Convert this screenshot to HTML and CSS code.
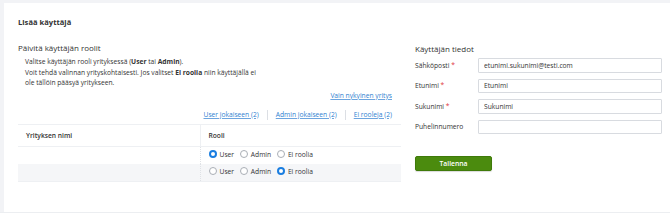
FILE: index.html
```html
<!DOCTYPE html>
<html lang="fi">

<head>
	<meta charset="UTF-8">
	<meta name="viewport"
				content="width=device-width, initial-scale=1.0">
	<title>Lisää käyttäjä</title>
	<link rel="stylesheet" href="styles.css">
</head>

<body>
	<div class="page">
		<div class="card">
			<h1 class="card-title">Lisää käyttäjä</h1>

			<div class="columns">
				<div class="roles">
					<h2 class="section-title">Päivitä käyttäjän roolit</h2>
					<p class="help">
						Valitse käyttäjän rooli yrityksessä (<b>User</b> tai <b>Admin</b>).<br>
						Voit tehdä valinnan yrityskohtaisesti. Jos valitset <b>Ei roolia</b> niin käyttäjällä ei<br>
						ole tällöin pääsyä yritykseen.
					</p>

					<div class="filter">
						<a href="#">Vain nykyinen yritys</a>
					</div>

					<div class="bulk">
						<a href="#">User jokaiseen (2)</a>
						<span class="sep"></span>
						<a href="#">Admin jokaiseen (2)</a>
						<span class="sep"></span>
						<a href="#">Ei rooleja (2)</a>
					</div>

					<table class="role-table">
						<thead>
							<tr>
								<th class="col-name">Yrityksen nimi</th>
								<th class="col-role">Rooli</th>
							</tr>
						</thead>
						<tbody>
							<tr>
								<td class="col-name"></td>
								<td class="col-role">
									<label class="radio"><input type="radio" name="r1" checked> User</label>
									<label class="radio"><input type="radio" name="r1"> Admin</label>
									<label class="radio"><input type="radio" name="r1"> Ei roolia</label>
								</td>
							</tr>
							<tr class="alt">
								<td class="col-name"></td>
								<td class="col-role">
									<label class="radio"><input type="radio" name="r2"> User</label>
									<label class="radio"><input type="radio" name="r2"> Admin</label>
									<label class="radio"><input type="radio" name="r2" checked> Ei roolia</label>
								</td>
							</tr>
						</tbody>
					</table>
				</div>

				<div class="details">
					<h2 class="section-title">Käyttäjän tiedot</h2>
					<div class="field">
						<label>Sähköposti <span class="req">*</span></label>
						<input type="text" value="etunimi.sukunimi@testi.com">
					</div>
					<div class="field">
						<label>Etunimi <span class="req">*</span></label>
						<input type="text" value="Etunimi">
					</div>
					<div class="field">
						<label>Sukunimi <span class="req">*</span></label>
						<input type="text" value="Sukunimi">
					</div>
					<div class="field">
						<label>Puhelinnumero</label>
						<input type="text" value="">
					</div>
					<button class="save">Tallenna</button>
				</div>
			</div>
		</div>
	</div>
</body>

</html>
```

FILE: styles.css
```css
* {
	box-sizing: border-box;
}

body {
	margin: 0;
	background-color: #fff;
	font-family: "Open Sans", "Noto Sans", sans-serif;
	color: #333;
	font-size: 6.7px;
}

.page {
	background-color: #f2f3f6;
	padding: 3px 0 0 4px;
	height: 213px;
	border-bottom: 1px solid #eceef1;
}

.card {
	background-color: #fff;
	height: 100%;
	padding: 14px 8px 0 14px;
}

.card-title {
	font-size: 7.6px;
	font-weight: 700;
	margin: 0;
	line-height: 10px;
}

.columns {
	display: flex;
	gap: 14px;
	margin-top: 15px;
}

.roles {
	width: 383px;
}

.details {
	flex: 1;
	padding-top: 1px;
}

.section-title {
	font-size: 8px;
	font-weight: 400;
	margin: 0;
	line-height: 11px;
}

.help {
	margin: 4px 0 0 7px;
	line-height: 10.5px;
}

.help b {
	font-weight: 700;
}

a {
	color: #2f7fd1;
	text-decoration-color: rgba(47, 127, 209, 0.7);
}

.filter {
	text-align: right;
	margin-top: 2px;
	padding-right: 9px;
	line-height: 10px;
}

.bulk {
	display: flex;
	justify-content: flex-end;
	align-items: center;
	gap: 8px;
	margin-top: 9px;
	padding-right: 9px;
	line-height: 10px;
}

.sep {
	width: 1px;
	height: 10px;
	background-color: #dcdfe4;
}

.role-table {
	width: 100%;
	border-collapse: collapse;
	margin-top: 4px;
}

.role-table th {
	text-align: left;
	font-weight: 600;
	height: 22px;
	border-top: 1px solid #eef0f3;
	border-bottom: 1px solid #eef0f3;
}

.role-table td {
	height: 17.5px;
}

.col-name {
	width: 182px;
	padding-left: 8px;
}

.col-role {
	padding-left: 8px;
}

th.col-role {
	border-left: 1px solid #eef0f3;
}

td.col-role {
	border-left: 1px dotted #dfe2e6;
}

.alt td {
	background-color: #f5f6f8;
	border-bottom: 1px solid #eef0f3;
}

.radio {
	display: inline-flex;
	align-items: center;
	gap: 3px;
	margin-right: 4px;
}

.radio input {
	appearance: none;
	width: 8px;
	height: 8px;
	margin: 0;
	border: 1px solid #a9aeb5;
	border-radius: 50%;
	background-color: #fff;
}

.radio input:checked {
	border: 2.5px solid #1a7ee0;
}

.field {
	display: flex;
	align-items: center;
	margin-top: 6px;
}

.field:first-of-type {
	margin-top: 4px;
}

.field label {
	width: 63px;
}

.req {
	color: #e0343c;
}

.field input {
	flex: 1;
	height: 14.5px;
	border: 1px solid #d8dbe0;
	border-radius: 1px;
	font-family: inherit;
	font-size: 6.7px;
	color: #333;
	padding: 0 5px;
}

.save {
	display: block;
	margin-top: 22px;
	width: 77px;
	height: 15px;
	background-color: #4b8b0e;
	border: 1px solid #3f7a09;
	border-radius: 2px;
	color: #fff;
	font-family: inherit;
	font-size: 6.8px;
	font-weight: 600;
	padding: 0;
	box-shadow: 0 1px 1px rgba(0, 0, 0, 0.15);
}
```
